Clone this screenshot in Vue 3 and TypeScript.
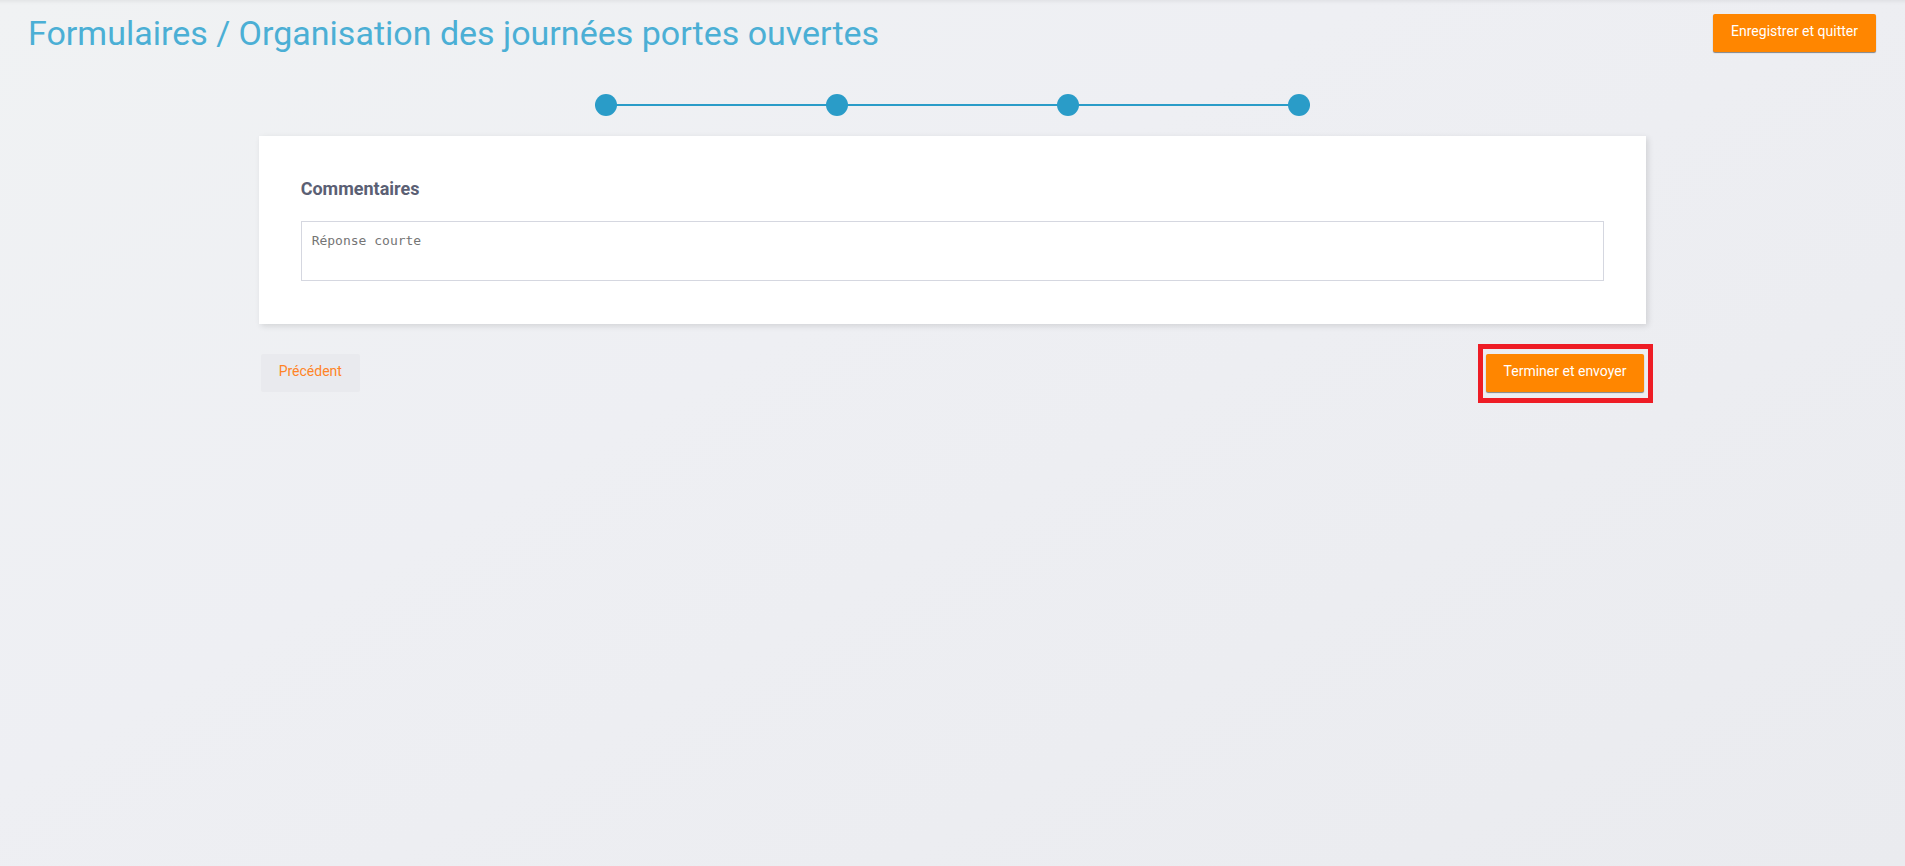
<script setup lang="ts">
import { ref } from 'vue'

const steps: string[] = ['Étape 1', 'Étape 2', 'Étape 3', 'Étape 4']
const comment = ref<string>('')
</script>

<template>
  <div class="page">
    <header class="header">
      <h1 class="title">Formulaires / Organisation des journées portes ouvertes</h1>
      <button type="button" class="btn btn-primary">Enregistrer et quitter</button>
    </header>

    <main class="content">
      <ol class="stepper">
        <li v-for="step in steps" :key="step" class="step" :aria-label="step"></li>
      </ol>

      <section class="card">
        <label class="question" for="comment">Commentaires</label>
        <textarea id="comment" v-model="comment" class="answer" placeholder="Réponse courte"></textarea>
      </section>

      <div class="actions">
        <button type="button" class="btn btn-secondary">Précédent</button>
        <div class="highlight">
          <button type="button" class="btn btn-primary">Terminer et envoyer</button>
        </div>
      </div>
    </main>
  </div>
</template>

<style>
body {
  margin: 0;
}
</style>

<style scoped>
.page {
  box-sizing: border-box;
  min-height: 100vh;
  background: linear-gradient(150deg, #f0f2f3 0%, #eeeff3 40%, #eaebef 100%);
  box-shadow: inset 0 5px 4px -4px rgba(0, 0, 0, 0.08);
  font-family: Roboto, "Liberation Sans", sans-serif;
}

.header {
  display: flex;
  justify-content: space-between;
  align-items: flex-start;
  padding: 14px 29px 0 28px;
}

.title {
  margin: 0;
  color: #4bafd5;
  font-size: 34px;
  font-weight: 400;
  line-height: 38px;
}

.content {
  box-sizing: border-box;
  width: calc(75% - 41px);
  margin: 42px auto 0;
}

.stepper {
  display: flex;
  justify-content: space-between;
  box-sizing: border-box;
  width: calc(50% + 22px);
  margin: 0 auto;
  padding: 0;
  list-style: none;
  background: linear-gradient(#2a9cc8, #2a9cc8) center / 100% 2px no-repeat;
}

.step {
  width: 22px;
  height: 22px;
  border-radius: 50%;
  background: #2a9cc8;
}

.card {
  display: flex;
  flex-direction: column;
  gap: 21px;
  margin-top: 20px;
  padding: 42px 42px 43px;
  background: #fff;
  box-shadow: 2px 2px 6px rgba(0, 0, 0, 0.12);
}

.question {
  color: #5b6074;
  font-size: 18px;
  font-weight: 700;
  line-height: 22px;
}

.answer {
  box-sizing: border-box;
  display: block;
  width: 100%;
  height: 60px;
  padding: 11px 10px;
  border: 1px solid #d5d7e0;
  border-radius: 0;
  background: #fff;
  color: #5b6074;
  font-family: "DejaVu Sans Mono", monospace;
  font-size: 13px;
  line-height: 16px;
  resize: none;
}

.answer::placeholder {
  color: #757575;
  opacity: 1;
}

.actions {
  display: flex;
  justify-content: space-between;
  margin-top: 30px;
  padding: 0 2px;
}

.btn {
  box-sizing: border-box;
  height: 38px;
  padding: 8px 18px 12px;
  border: 0;
  border-radius: 2px;
  font-family: inherit;
  font-size: 14px;
  line-height: 18px;
  cursor: pointer;
}

.btn-primary {
  background: #ff8600;
  color: #fff;
  box-shadow: 0 1px 1px rgba(0, 0, 0, 0.45);
}

.btn-secondary {
  background: #e9eaee;
  color: #ff8426;
}

.highlight {
  position: relative;
}

.highlight::after {
  content: "";
  position: absolute;
  inset: -10px -9px -11px -8px;
  border: 5px solid #ee1c25;
  pointer-events: none;
}
</style>
